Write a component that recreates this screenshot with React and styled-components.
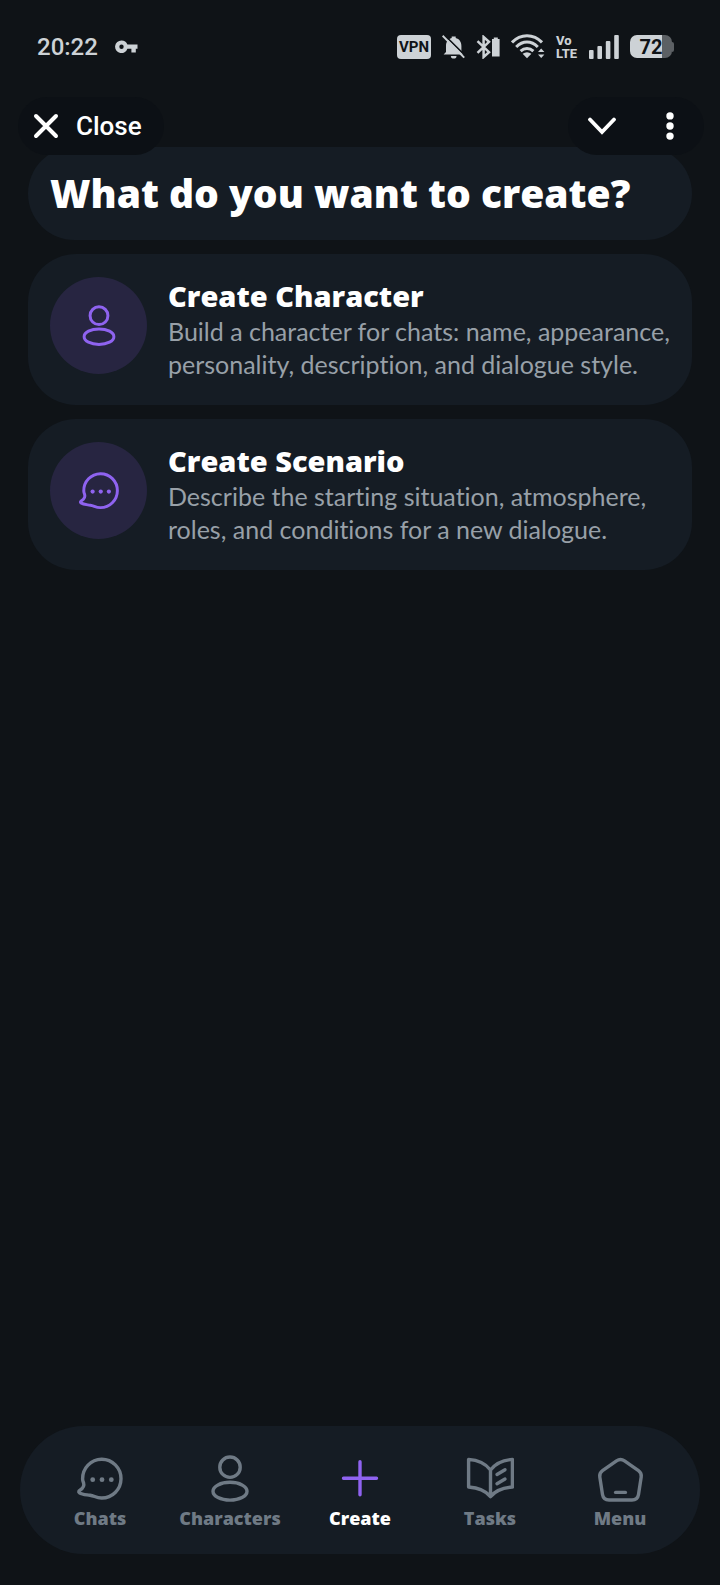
import React from 'react';
import styled, { createGlobalStyle, css } from 'styled-components';

const GlobalStyle = createGlobalStyle`
  * {
    box-sizing: border-box;
  }

  body {
    margin: 0;
    background: #0f1317;
    font-family: Lato, 'Open Sans', sans-serif;
    font-variant-ligatures: none;
  }

  button {
    padding: 0;
    border: none;
    background: none;
    color: inherit;
    font: inherit;
    cursor: pointer;
  }

  svg {
    display: block;
    flex: none;
  }
`;

const Page = styled.div`
  display: flex;
  flex-direction: column;
  min-height: 100vh;
  color: #fff;
`;

const StatusBar = styled.div`
  display: flex;
  align-items: center;
  justify-content: space-between;
  height: 93px;
  padding: 0 46px 0 37px;
  color: #cdd2d6;
  font-family: Roboto, sans-serif;
`;

const StatusGroup = styled.div`
  display: flex;
  align-items: center;
  gap: ${({ $gap }) => $gap}px;
`;

const Time = styled.span`
  font-size: 24px;
  font-weight: 500;
  line-height: 28px;
`;

const VpnBadge = styled.span`
  width: 34px;
  height: 24px;
  border-radius: 4px;
  background: #cdd2d6;
  color: #0f1317;
  font-size: 15px;
  font-weight: 700;
  line-height: 25px;
  text-align: center;
`;

const Volte = styled.span`
  display: flex;
  flex-direction: column;
  width: 22px;
  font-size: 13px;
  font-weight: 800;
  line-height: 13px;
`;

const Battery = styled.span`
  display: flex;
  align-items: center;
`;

const BatteryLevel = styled.span`
  width: 42px;
  height: 23px;
  border-radius: 7px;
  background: linear-gradient(to right, #cdd2d6 76%, #5c6064 76%);
  color: #0f1317;
  font-size: 20px;
  font-weight: 700;
  line-height: 24px;
  text-align: center;
`;

const BatteryTip = styled.span`
  width: 2px;
  height: 10px;
  border-radius: 0 2px 2px 0;
  background: #5c6064;
`;

const TopBar = styled.header`
  z-index: 1;
  display: flex;
  justify-content: space-between;
  margin-bottom: -8px;
  padding: 4px 16px 0 18px;
`;

const Pill = styled.div`
  display: flex;
  align-items: center;
  height: 58px;
  border-radius: 29px;
  background: #0c1015;
`;

const CloseButton = styled.button`
  display: flex;
  align-items: center;
  gap: 17px;
  height: 58px;
  padding: 0 22px 0 15px;
  font-family: Roboto, sans-serif;
  font-size: 26px;
  font-weight: 500;
`;

const IconButton = styled.button`
  display: flex;
  align-items: center;
  justify-content: center;
  width: 68px;
  height: 58px;
`;

const Main = styled.main`
  display: flex;
  flex-direction: column;
  gap: 14px;
  padding: 0 28px;
`;

const panel = css`
  border-radius: 48px;
  background: #151c24;
`;

const heavy = css`
  font-family: 'Open Sans', Lato, sans-serif;
  font-weight: 800;
`;

const Heading = styled.h1`
  ${panel}
  ${heavy}
  margin: 0;
  padding: 20px 22px 21px;
  font-size: 39px;
  line-height: 52px;
`;

const Card = styled.button`
  ${panel}
  display: flex;
  align-items: flex-start;
  gap: 21px;
  padding: 23px 14px 22px 22px;
  text-align: left;
`;

const CardIcon = styled.span`
  display: flex;
  align-items: center;
  justify-content: center;
  flex: none;
  width: 97px;
  height: 97px;
  border-radius: 50%;
  background: #272541;
  color: #8f63f0;
`;

const CardTitle = styled.span`
  ${heavy}
  display: block;
  font-size: 29px;
  line-height: 38px;
`;

const CardText = styled.span`
  display: block;
  padding-bottom: 2px;
  color: #98a0a8;
  font-size: 25px;
  line-height: 33px;
`;

const Nav = styled.nav`
  display: flex;
  height: 128px;
  margin: auto 20px 31px;
  padding: 0 15px;
  border-radius: 64px;
  background: #151c24;
`;

const NavItem = styled.button`
  ${heavy}
  display: flex;
  flex: 1;
  flex-direction: column;
  align-items: center;
  gap: 3px;
  padding-top: 29px;
  color: ${({ $active }) => ($active ? '#fff' : '#6f7a85')};
  font-size: 18px;
  line-height: 24px;

  svg {
    color: ${({ $active }) => ($active ? '#8f63f0' : 'inherit')};
  }
`;

const LineIcon = ({ size = 48, children }) => (
  <svg
    width={size}
    height={size}
    viewBox='0 0 48 48'
    fill='none'
    stroke='currentColor'
    strokeWidth='3.4'
    strokeLinecap='round'
    strokeLinejoin='round'
    aria-hidden='true'>
    {children}
  </svg>
);

const ChatIcon = ({ size }) => (
  <LineIcon size={size}>
    <path d='M6.6 24A19.2 19.4 0 1 1 25.5 43C20 43 18.5 40.8 14 40.2C9 39.5 6 39.5 3.5 37.8C2.2 36.9 2.8 36 4 35.2C7.5 32.8 8.4 30.5 7.6 28C7 26.5 6.6 25.5 6.6 24Z' />
    <g fill='currentColor' stroke='none'>
      <circle cx='16.7' cy='24.7' r='2.4' />
      <circle cx='26' cy='24.7' r='2.4' />
      <circle cx='35.3' cy='24.7' r='2.4' />
    </g>
  </LineIcon>
);

const PersonIcon = ({ size }) => (
  <LineIcon size={size}>
    <circle cx='24' cy='12.2' r='10.2' />
    <ellipse cx='24' cy='36.2' rx='17' ry='8.9' />
  </LineIcon>
);

const PlusIcon = () => (
  <LineIcon>
    <path d='M24 6.8V39.8M7.5 23.3H40.5' />
  </LineIcon>
);

const BookIcon = () => (
  <LineIcon>
    <path d='M24.5 15C19.5 8.5 12 5 2.6 4.4V32C12 32.6 19.5 35.5 24.5 41.6C29.5 35.5 37 32.6 46.4 32V4.4C37 5 29.5 8.5 24.5 15ZM24.5 15V41' />
    <path d='M31 19.5L39 14.7M31 28.7L39 24' />
  </LineIcon>
);

const MenuIcon = () => (
  <LineIcon>
    <path d='M20.5 5.8Q24.5 3 28.5 5.8L42.5 15.6Q45.8 18 45.2 22L42.5 39.5Q41.6 45 36 45H13Q7.4 45 6.5 39.5L3.8 22Q3.2 18 6.5 15.6Z' />
    <path d='M19.6 37.4H29.4' />
  </LineIcon>
);

const KeyIcon = () => (
  <svg width='23' height='14' viewBox='0 0 23 14' aria-hidden='true'>
    <path
      fill='currentColor'
      fillRule='evenodd'
      d='M6.5 .5A6.3 6.3 0 0 1 12.4 4.5H22.5V8.7H20.8V12.5H16.4V8.7H12.4A6.3 6.3 0 1 1 6.5 .5ZM6.5 4.5A2.2 2.2 0 1 0 6.5 8.9A2.2 2.2 0 1 0 6.5 4.5Z'
    />
  </svg>
);

const BellOffIcon = () => (
  <svg width='23' height='24' viewBox='0 0 23 24' aria-hidden='true'>
    <g fill='currentColor'>
      <path d='M1.6 19.5L4 17V11C4 6.5 6.3 4 9.7 3.1V1.5H13.7V3.1C17.3 4 19.4 7 19.4 11V17L21.5 19.5Z' />
      <path d='M8.9 21H14.5A2.8 2.6 0 0 1 8.9 21Z' />
    </g>
    <path d='M1.8 -.6L24 21.4' stroke='#0f1317' strokeWidth='1.6' />
    <path d='M.6 .8L22.2 22.6' stroke='currentColor' strokeWidth='2' />
  </svg>
);

const BluetoothIcon = () => (
  <svg width='24' height='24' viewBox='0 0 24 24' aria-hidden='true'>
    <path
      d='M1.5 6.2L13 17.2L7.6 22V2L13 6.8L1.5 17.8'
      fill='none'
      stroke='currentColor'
      strokeWidth='2.5'
    />
    <path d='M17.8 2.6H21.8V4H23.6V21.5H16V4H17.8Z' fill='currentColor' />
  </svg>
);

const WifiIcon = () => (
  <svg width='34' height='25' viewBox='0 0 34 25' aria-hidden='true'>
    <g fill='none' stroke='currentColor' strokeWidth='3'>
      <path d='M1 8.4C9.5 -.6 22.5 -.6 31 8.4' />
      <path d='M5.2 13C11.7 6.4 20.3 6.4 26.8 13' />
      <path d='M9.6 17.2C13.4 13.6 18.6 13.6 22.4 17.2' />
    </g>
    <g fill='currentColor'>
      <path d='M11.6 19.7Q16 16.6 20.4 19.7L16 24.3Z' />
      <path d='M27 18L30.2 14.4L33.4 18ZM27 20.4H33.4L30.2 24Z' />
    </g>
  </svg>
);

const SignalIcon = () => (
  <svg width='30' height='24' viewBox='0 0 30 24' aria-hidden='true'>
    <g fill='currentColor'>
      <rect x='0' y='15' width='4.6' height='9' rx='1' />
      <rect x='8.4' y='11' width='4.6' height='13' rx='1' />
      <rect x='16.8' y='6' width='4.6' height='18' rx='1' />
      <rect x='25.2' y='0' width='4.6' height='24' rx='1' />
    </g>
  </svg>
);

const CloseIcon = () => (
  <svg width='26' height='26' viewBox='0 0 26 26' aria-hidden='true'>
    <path
      d='M3 3L23 23M23 3L3 23'
      stroke='currentColor'
      strokeWidth='4'
      strokeLinecap='round'
    />
  </svg>
);

const ChevronIcon = () => (
  <svg width='30' height='18' viewBox='0 0 30 18' aria-hidden='true'>
    <path
      d='M3 2.5L15 15L27 2.5'
      fill='none'
      stroke='currentColor'
      strokeWidth='3.8'
      strokeLinecap='round'
    />
  </svg>
);

const MoreIcon = () => (
  <svg width='8' height='28' viewBox='0 0 8 28' aria-hidden='true'>
    <g fill='currentColor'>
      <circle cx='4' cy='3.9' r='3.7' />
      <circle cx='4' cy='14' r='3.7' />
      <circle cx='4' cy='24.1' r='3.7' />
    </g>
  </svg>
);

const cards = [
  {
    title: 'Create Character',
    text:
      'Build a character for chats: name, appearance, personality, description, and dialogue style.',
    Icon: PersonIcon
  },
  {
    title: 'Create Scenario',
    text:
      'Describe the starting situation, atmosphere, roles, and conditions for a new dialogue.',
    Icon: ChatIcon
  }
];

const tabs = [
  { label: 'Chats', Icon: ChatIcon },
  { label: 'Characters', Icon: PersonIcon },
  { label: 'Create', Icon: PlusIcon, active: true },
  { label: 'Tasks', Icon: BookIcon },
  { label: 'Menu', Icon: MenuIcon }
];

const App = () => {
  return (
    <Page>
      <GlobalStyle />
      <StatusBar>
        <StatusGroup $gap={17}>
          <Time>20:22</Time>
          <KeyIcon />
        </StatusGroup>
        <StatusGroup $gap={11}>
          <VpnBadge>VPN</VpnBadge>
          <BellOffIcon />
          <BluetoothIcon />
          <WifiIcon />
          <Volte>
            <span>Vo</span>
            <span>LTE</span>
          </Volte>
          <SignalIcon />
          <Battery>
            <BatteryLevel>72</BatteryLevel>
            <BatteryTip />
          </Battery>
        </StatusGroup>
      </StatusBar>
      <TopBar>
        <Pill>
          <CloseButton>
            <CloseIcon />
            Close
          </CloseButton>
        </Pill>
        <Pill>
          <IconButton aria-label='Collapse'>
            <ChevronIcon />
          </IconButton>
          <IconButton aria-label='More options'>
            <MoreIcon />
          </IconButton>
        </Pill>
      </TopBar>
      <Main>
        <Heading>What do you want to create?</Heading>
        {cards.map(({ title, text, Icon }) => (
          <Card key={title}>
            <CardIcon>
              <Icon size={42} />
            </CardIcon>
            <span>
              <CardTitle>{title}</CardTitle>
              <CardText>{text}</CardText>
            </span>
          </Card>
        ))}
      </Main>
      <Nav>
        {tabs.map(({ label, Icon, active }) => (
          <NavItem
            key={label}
            $active={active}
            aria-current={active ? 'page' : undefined}>
            <Icon />
            {label}
          </NavItem>
        ))}
      </Nav>
    </Page>
  );
};

export default App;
